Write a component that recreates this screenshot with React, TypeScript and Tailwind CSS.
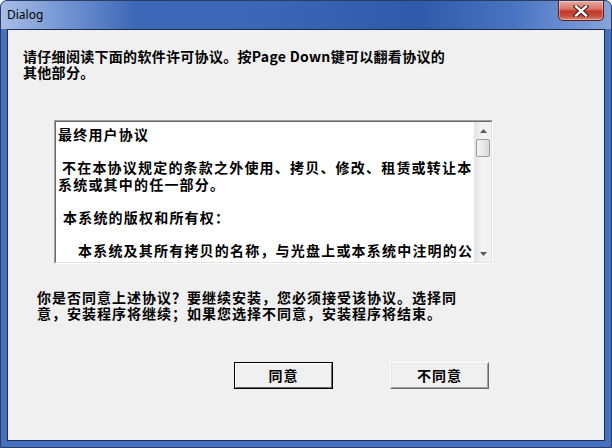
import React from "react";

const cjk = { fontFamily: '"Noto Sans CJK SC", "Noto Sans", sans-serif' };

const boxLines = [
  { text: "最终用户协议", pad: "pl-0" },
  { text: "", pad: "pl-0" },
  { text: "不在本协议规定的条款之外使用、拷贝、修改、租赁或转让本", pad: "pl-[4px]" },
  { text: "系统或其中的任一部分。", pad: "pl-0" },
  { text: "", pad: "pl-0" },
  { text: "本系统的版权和所有权：", pad: "pl-[5px]" },
  { text: "", pad: "pl-0" },
  { text: "本系统及其所有拷贝的名称，与光盘上或本系统中注明的公", pad: "pl-[20px]" },
];

function CloseButton() {
  return (
    <div className="mr-[7px] flex h-[20px] w-[46px] items-center justify-center rounded-b-[5px] border border-t-0 border-[#5b1f1a] bg-[linear-gradient(180deg,#e8a99e_0%,#d9776a_40%,#c13a29_55%,#c8503e_80%,#dc8a7c_100%)] shadow-[inset_0_0_0_1px_rgba(255,255,255,0.35)]">
      <svg width="16" height="12" viewBox="0 0 16 12">
        <path d="M3 1.5 L13 10.5 M13 1.5 L3 10.5" stroke="#3a1a16" strokeWidth="4.4" strokeLinecap="square" />
        <path d="M3 1.5 L13 10.5 M13 1.5 L3 10.5" stroke="#ffffff" strokeWidth="2.4" strokeLinecap="square" />
      </svg>
    </div>
  );
}

function Scrollbar() {
  return (
    <div className="flex w-[17px] flex-col border-l border-[#e6e6e6] bg-[linear-gradient(90deg,#e3e3e3_0%,#f2f2f2_40%,#f2f2f2_100%)]">
      <div className="flex h-[17px] items-center justify-center">
        <svg width="7" height="4" viewBox="0 0 7 4">
          <path d="M0 4 L3.5 0 L7 4 Z" fill="#5a5a5a" />
        </svg>
      </div>
      <div className="mx-[1px] h-[18px] rounded-[2px] border border-[#9b9b9b] bg-[linear-gradient(90deg,#f4f4f4_0%,#e9e9e9_50%,#d8d8d8_100%)]" />
      <div className="flex-1" />
      <div className="flex h-[17px] items-center justify-center">
        <svg width="7" height="4" viewBox="0 0 7 4">
          <path d="M0 0 L3.5 4 L7 0 Z" fill="#5a5a5a" />
        </svg>
      </div>
    </div>
  );
}

function DialogButton({ label, isDefault }: { label: string; isDefault?: boolean }) {
  return (
    <div
      className={
        isDefault
          ? "h-[27px] w-[99px] border border-[#000]"
          : "h-[27px] w-[99px] border border-t-[#ffffff] border-l-[#ffffff] border-r-[#696969] border-b-[#696969]"
      }
    >
      <div
        className={
          isDefault
            ? "flex h-full w-full items-center justify-center border border-t-[#ffffff] border-l-[#ffffff] border-r-[#696969] border-b-[#696969] bg-[#f0f0f0]"
            : "flex h-full w-full items-center justify-center border border-t-[#e3e3e3] border-l-[#e3e3e3] border-r-[#a0a0a0] border-b-[#a0a0a0] bg-[#f0f0f0]"
        }
      >
        <span className="text-[14px] font-bold tracking-[1px] text-black" style={cjk}>
          {label}
        </span>
      </div>
    </div>
  );
}

export default function App() {
  return (
    <div className="flex h-[448px] w-[612px] flex-col overflow-hidden rounded-t-[7px] border border-[#2b3d63] bg-[#4470bf]">
      {/* Title bar */}
      <div className="flex h-[28px] shrink-0 items-start justify-between bg-[linear-gradient(90deg,#a7bde6_0%,#7596d3_10%,#3d68b7_22%,#3b66b5_45%,#2e5aa9_68%,#4a74c2_84%,#86a4db_100%)]">
        <span className="ml-[6px] mt-[6px] text-[12px] leading-[16px] text-black" style={{ fontFamily: '"Noto Sans", sans-serif' }}>
          Dialog
        </span>
        <CloseButton />
      </div>

      {/* Client area */}
      <div className="mx-[6px] mb-[6px] flex flex-1 flex-col border border-[#1b2c55] bg-[#f0f0f0] text-black" style={cjk}>
        <div className="ml-[15px] mt-[18px] text-[14px] font-bold leading-[16px] tracking-[0.3px] whitespace-nowrap">
          <div>请仔细阅读下面的软件许可协议。按Page Down键可以翻看协议的</div>
          <div>其他部分。</div>
        </div>

        {/* License text box */}
        <div className="ml-[46px] mt-[40px] flex h-[144px] w-[439px] border border-t-[#a0a0a0] border-l-[#a0a0a0] border-r-[#ffffff] border-b-[#ffffff]">
          <div className="flex flex-1 border border-t-[#696969] border-l-[#696969] border-r-[#e3e3e3] border-b-[#e3e3e3] bg-white">
            <div className="flex-1 overflow-hidden pl-[2px] pt-[4px] text-[14px] font-bold leading-[16.5px] tracking-[1.2px] whitespace-nowrap">
              {boxLines.map((line, i) => (
                <div key={i} className={"h-[16.5px] " + line.pad}>
                  {line.text}
                </div>
              ))}
            </div>
            <Scrollbar />
          </div>
        </div>

        <div className="ml-[29px] mt-[26px] text-[14px] font-bold leading-[15.5px] tracking-[1px] whitespace-nowrap">
          <div>你是否同意上述协议？要继续安装，您必须接受该协议。选择同</div>
          <div>意，安装程序将继续；如果您选择不同意，安装程序将结束。</div>
        </div>

        <div className="ml-[226px] mt-[41px] flex gap-[57px]">
          <DialogButton label="同意" isDefault />
          <DialogButton label="不同意" />
        </div>
      </div>
    </div>
  );
}
